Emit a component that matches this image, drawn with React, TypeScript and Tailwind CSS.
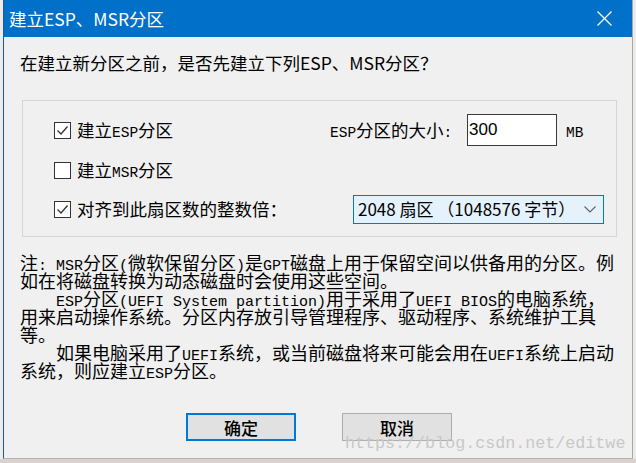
import React from "react";

// latin text in the SimSun-like half-width style
const M = ({ children, note }: { children: React.ReactNode; note?: boolean }) => (
  <span className={note ? "font-['Liberation_Mono'] text-[15px] leading-none" : "font-['Liberation_Mono'] text-[14.5px] leading-none"}>
    {children}
  </span>
);

const CheckBox = ({ checked }: { checked?: boolean }) => (
  <div className="w-[17px] h-[17px] shrink-0 border border-[#333333] bg-white flex items-center justify-center">
    {checked && (
      <svg width="15" height="15" viewBox="0 0 15 15">
        <polyline points="2.5,7.5 6,11 12.5,3.5" fill="none" stroke="#333333" strokeWidth="1.3" />
      </svg>
    )}
  </div>
);

const NoteLine = ({ children, indent }: { children: React.ReactNode; indent?: boolean }) => (
  <div className={indent ? "h-[18px] leading-[18px] pl-[36px]" : "h-[18px] leading-[18px]"}>{children}</div>
);

const App = () => {
  return (
    <div className="w-[636px] h-[463px] overflow-hidden bg-[#ecebea] flex flex-col font-['Noto_Sans_CJK_SC',sans-serif] text-black">
      <div className="flex h-[459px] pl-[3px]">
        <div className="relative w-[630px] h-[459px] flex flex-col bg-[#f0f0f0] border-l border-l-[#1f5a9c] border-r border-r-[#a8a8a8] border-b border-b-[#b4b4b4]">
          {/* title bar */}
          <div className="h-[37px] shrink-0 bg-[#0070c9] flex items-center justify-between pl-[5px] pr-[20px]">
            <span className="text-white text-[17.5px] leading-none">建立ESP、MSR分区</span>
            <svg width="15" height="15" viewBox="0 0 15 15">
              <line x1="0.5" y1="0.5" x2="14.5" y2="14.5" stroke="white" strokeWidth="1.2" />
              <line x1="14.5" y1="0.5" x2="0.5" y2="14.5" stroke="white" strokeWidth="1.2" />
            </svg>
          </div>

          <div className="mt-[14px] pl-[16px] text-[17.5px] leading-[24px] whitespace-nowrap">
            在建立新分区之前，是否先建立下列ESP、MSR分区？
          </div>

          {/* group box */}
          <div className="mt-[25px] ml-[18px] w-[595px] border border-[#d6d6d6] pt-[13px] pb-[12px] pl-[31px] text-[17.5px] leading-[24px] whitespace-nowrap">
            <div className="flex items-center h-[32px]">
              <div className="w-[276px] shrink-0 flex items-center gap-[6px]">
                <CheckBox checked />
                <span>建立<M>ESP</M>分区</span>
              </div>
              <span className="w-[137px] shrink-0"><M>ESP</M>分区的大小<M>:</M></span>
              <div className="w-[90px] h-[32px] bg-white border border-[#3a3a3a] flex items-center pl-[1px] font-['Liberation_Sans'] text-[17px]">
                300
              </div>
              <span className="ml-[9px]"><M>MB</M></span>
            </div>

            <div className="flex items-center h-[24px] mt-[12px] gap-[6px]">
              <CheckBox />
              <span>建立<M>MSR</M>分区</span>
            </div>

            <div className="flex items-center h-[30px] mt-[12px]">
              <div className="w-[299px] shrink-0 flex items-center gap-[6px]">
                <CheckBox checked />
                <span>对齐到此扇区数的整数倍：</span>
              </div>
              <div className="w-[251px] h-[29px] bg-[#e5f1fb] border border-[#0078d7] flex items-center justify-between pl-[4px] pr-[7px] text-[17px]">
                <span>2048 扇区 （1048576 字节）</span>
                <svg width="12" height="7" viewBox="0 0 12 7">
                  <polyline points="0.5,0.5 6,6 11.5,0.5" fill="none" stroke="#606060" strokeWidth="1.1" />
                </svg>
              </div>
            </div>
          </div>

          {/* note */}
          <div className="mt-[16px] pl-[16px] text-[18px] whitespace-nowrap">
            <NoteLine>注<M note>: MSR</M>分区<M note>(</M>微软保留分区<M note>)</M>是<M note>GPT</M>磁盘上用于保留空间以供备用的分区。例</NoteLine>
            <NoteLine>如在将磁盘转换为动态磁盘时会使用这些空间。</NoteLine>
            <NoteLine indent><M note>ESP</M>分区<M note>(UEFI System partition)</M>用于采用了<M note>UEFI BIOS</M>的电脑系统，</NoteLine>
            <NoteLine>用来启动操作系统。分区内存放引导管理程序、驱动程序、系统维护工具</NoteLine>
            <NoteLine>等。</NoteLine>
            <NoteLine indent>如果电脑采用了<M note>UEFI</M>系统，或当前磁盘将来可能会用在<M note>UEFI</M>系统上启动</NoteLine>
            <NoteLine>系统，则应建立<M note>ESP</M>分区。</NoteLine>
          </div>

          {/* buttons */}
          <div className="mt-[34px] flex pl-[182px] gap-[46px]">
            <button className="w-[110px] h-[28px] bg-[#e1e1e1] border-2 border-[#0078d7] text-[17px] font-medium leading-none flex items-center justify-center">
              确定
            </button>
            <button className="w-[110px] h-[28px] bg-[#e1e1e1] border border-[#adadad] text-[17px] font-medium leading-none flex items-center justify-center">
              取消
            </button>
          </div>

          <span className="absolute left-[341px] top-[434px] font-['Liberation_Mono'] text-[16.7px] leading-[20px] text-[#c8c8c8]">
            https://blog.csdn.net/editwe
          </span>
        </div>
      </div>
      <div className="h-[4px] bg-[#d9d1ce]" />
    </div>
  );
};

export default App;
